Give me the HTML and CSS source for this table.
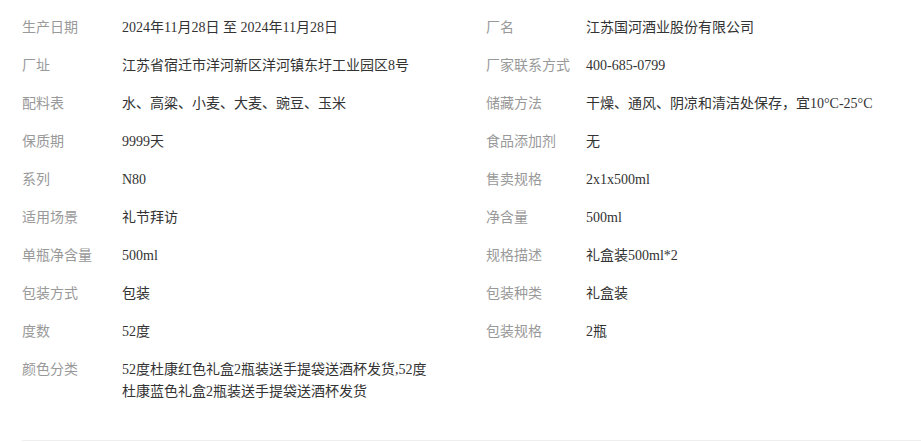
FILE: index.html
```html
<!DOCTYPE html>
<html lang="zh-CN">
<head>
    <meta charset="UTF-8">
    <meta name="viewport" content="width=device-width, initial-scale=1.0">
    <title>商品参数</title>
    <link rel="stylesheet" href="styles.css">
</head>
<body>
    <div class="params">
        <ul class="list">
            <li><span class="name">生产日期</span><span class="val">2024年11月28日 至 2024年11月28日</span></li>
            <li><span class="name">厂名</span><span class="val">江苏国河酒业股份有限公司</span></li>
            <li><span class="name">厂址</span><span class="val">江苏省宿迁市洋河新区洋河镇东圩工业园区8号</span></li>
            <li><span class="name">厂家联系方式</span><span class="val">400-685-0799</span></li>
            <li><span class="name">配料表</span><span class="val">水、高粱、小麦、大麦、豌豆、玉米</span></li>
            <li><span class="name">储藏方法</span><span class="val">干燥、通风、阴凉和清洁处保存，宜10°C-25°C</span></li>
            <li><span class="name">保质期</span><span class="val">9999天</span></li>
            <li><span class="name">食品添加剂</span><span class="val">无</span></li>
            <li><span class="name">系列</span><span class="val">N80</span></li>
            <li><span class="name">售卖规格</span><span class="val">2x1x500ml</span></li>
            <li><span class="name">适用场景</span><span class="val">礼节拜访</span></li>
            <li><span class="name">净含量</span><span class="val">500ml</span></li>
            <li><span class="name">单瓶净含量</span><span class="val">500ml</span></li>
            <li><span class="name">规格描述</span><span class="val">礼盒装500ml*2</span></li>
            <li><span class="name">包装方式</span><span class="val">包装</span></li>
            <li><span class="name">包装种类</span><span class="val">礼盒装</span></li>
            <li><span class="name">度数</span><span class="val">52度</span></li>
            <li><span class="name">包装规格</span><span class="val">2瓶</span></li>
            <li><span class="name">颜色分类</span><span class="val">52度杜康红色礼盒2瓶装送手提袋送酒杯发货,52度杜康蓝色礼盒2瓶装送手提袋送酒杯发货</span></li>
        </ul>
    </div>
</body>
</html>
```

FILE: styles.css
```css
*{
    margin: 0;
    padding: 0;
}
body {
    background: #fff;
    font-size: 14px;
    line-height: 22px;
    font-family: "Liberation Serif", "Noto Sans CJK SC", serif;
}
.params {
    padding: 9px 0 0 22px;
}
.params .list {
    list-style: none;
    display: grid;
    grid-template-columns: 464px 1fr;
    padding-bottom: 29px;
    border-bottom: 1px solid #eee;
}
.params .list li {
    display: flex;
    align-items: flex-start;
    padding: 8px 50px 8px 0;
}
.params .list li:nth-child(even) {
    padding-right: 0;
}
.params .name {
    flex: none;
    width: 100px;
    color: #999;
}
.params .val {
    flex: 1;
    color: #333;
}
```
